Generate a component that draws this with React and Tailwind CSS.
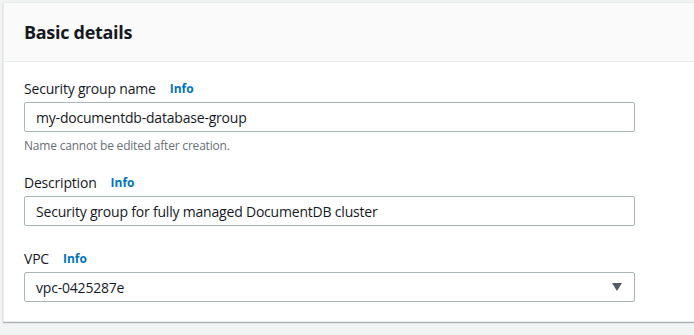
const font = { fontFamily: '"Open Sans", "Noto Sans", Arial, sans-serif' };

function Label({ text }) {
  return (
    <div className="flex items-center h-[22px]">
      <span className="text-[14px] tracking-[-0.2px] text-[#16191f]">{text}</span>
      <a className="ml-3.5 mt-[1px] text-[12px] font-bold text-[#0073bb]">Info</a>
    </div>
  );
}

function TextInput({ value }) {
  return (
    <div className="mt-[3px] h-[30px] w-[611px] rounded-[2px] border border-[#aab7b8] bg-white px-[11px] flex items-center text-[14px] tracking-[-0.2px] text-[#16191f]">
      {value}
    </div>
  );
}

export default function App() {
  return (
    <div className="min-h-[335px] w-[694px] overflow-hidden bg-[#f2f3f3] pt-[2px] pl-[3px]" style={font}>
      <div className="w-[720px] border border-[#eaeded] bg-white shadow-[0_1px_1px_0_rgba(0,28,36,0.3)]">
        <div className="h-[59px] border-b border-[#eaeded] bg-[#fafafa] pl-5 flex items-center">
          <h2 className="text-[18px] font-bold tracking-[-0.3px] text-[#16191f]">Basic details</h2>
        </div>
        <div className="pl-5 pt-[15px] pb-[19px]">
          <Label text="Security group name" />
          <TextInput value="my-documentdb-database-group" />
          <p className="mt-[6px] text-[12px] leading-[16px] tracking-[-0.2px] text-[#687078]">Name cannot be edited after creation.</p>

          <div className="mt-[17px]">
            <Label text="Description" />
            <TextInput value="Security group for fully managed DocumentDB cluster" />
          </div>

          <div className="mt-[21px]">
            <Label text="VPC" />
            <div className="mt-[3px] h-[30px] w-[611px] rounded-[2px] border border-[#aab7b8] bg-white pl-[11px] pr-[12px] flex items-center justify-between text-[14px] tracking-[-0.2px] text-[#16191f]">
              <span>vpc-0425287e</span>
              <svg width="10" height="8" viewBox="0 0 10 8">
                <path d="M0 0 H10 L5 8 Z" fill="#545b64" />
              </svg>
            </div>
          </div>
        </div>
      </div>
    </div>
  );
}
